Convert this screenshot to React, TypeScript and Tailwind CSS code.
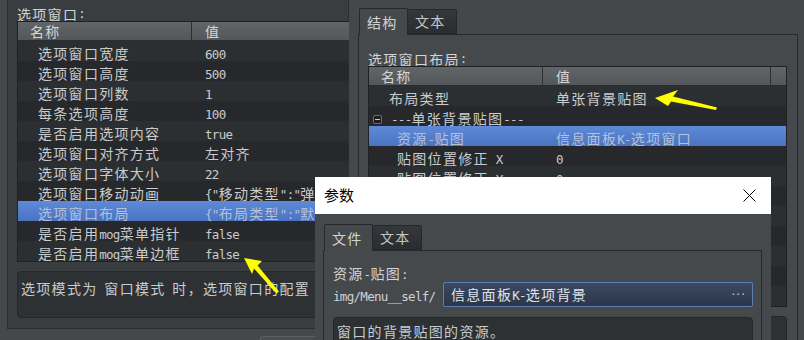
import React from 'react'

const ASCII = /^[\x00-\x7f]+$/

// mixed text: CJK in Noto Sans CJK, latin in a narrow mono
const Txt = ({ s }: { s: string }) => {
  const parts = s.split(/([\x00-\x7f]+)/).filter((p) => p !== '')
  return (
    <>
      {parts.map((p, i) =>
        ASCII.test(p) ? (
          <span key={i} className="whitespace-pre font-['DejaVu_Sans_Mono',monospace] text-[12.5px] tracking-[-0.7px]">{p}</span>
        ) : (
          <span key={i} className="font-['Noto_Sans_CJK_SC',sans-serif] text-[14px] tracking-[1.3px]">{p}</span>
        )
      )}
    </>
  )
}

type Row = { name: string; value?: string; indent: 'root' | 'child' | 'group' | 'left'; sel?: boolean }

const indentClass = {
  left: 'pl-[20px]',
  root: 'pl-[20px]',
  child: 'pl-[28px]',
  group: 'pl-[4px]'
}

const Expander = () => (
  <span className="mr-[9px] inline-flex h-[9px] w-[9px] items-center justify-center rounded-[2px] border border-[#6a6d70] bg-[#1b1d1f] align-middle">
    <span className="h-px w-[5px] bg-[#c8cacc]" />
  </span>
)

const PropTable = ({ rows, wide, darkFirst }: { rows: Row[]; wide: boolean; darkFirst: boolean }) => (
  <div className={wide ? 'w-[419px] shrink-0 overflow-hidden border border-[#1f2123]' : 'w-[332px] shrink-0 overflow-hidden border border-r-0 border-[#1f2123]'}>
    <div className="flex h-[19px] border-b border-[#2a2c2f] bg-linear-to-b from-[#626568] to-[#54575a] leading-[18px] text-[#d4d6d8]">
      <div className="w-[174px] shrink-0 border-r border-[#2c2e31] pl-[12px]"><Txt s="名称" /></div>
      {wide ? (
        <>
          <div className="w-[228px] shrink-0 border-r border-[#2c2e31] pl-[13px]"><Txt s="值" /></div>
          <div className="flex-1" />
        </>
      ) : (
        <div className="flex-1 pl-[13px]"><Txt s="值" /></div>
      )}
    </div>
    {rows.map((r, i) => {
      const bg = r.sel
        ? 'bg-linear-to-b from-[#5e8ad7] to-[#4b73c2] text-[#b4c1da]'
        : (i % 2 === 0) === darkFirst
          ? 'bg-[#26282b]'
          : 'bg-[#2c2f31]'
      return (
        <div key={i} className={`flex h-[20px] items-start whitespace-nowrap pt-[5px] leading-[15px] ${bg}`}>
          <div className={`w-[174px] shrink-0 ${indentClass[r.indent]}`}>
            {r.indent === 'group' && <Expander />}
            <Txt s={r.name} />
          </div>
          <div className="flex-1 pl-[13px]">{r.value && <Txt s={r.value} />}</div>
        </div>
      )
    })}
  </div>
)

const leftRows: Row[] = [
  { name: '选项窗口宽度', value: '600', indent: 'left' },
  { name: '选项窗口高度', value: '500', indent: 'left' },
  { name: '选项窗口列数', value: '1', indent: 'left' },
  { name: '每条选项高度', value: '100', indent: 'left' },
  { name: '是否启用选项内容', value: 'true', indent: 'left' },
  { name: '选项窗口对齐方式', value: '左对齐', indent: 'left' },
  { name: '选项窗口字体大小', value: '22', indent: 'left' },
  { name: '选项窗口移动动画', value: '{"移动类型":"弹', indent: 'left' },
  { name: '选项窗口布局', value: '{"布局类型":"默', indent: 'left', sel: true },
  { name: '是否启用mog菜单指针', value: 'false', indent: 'left' },
  { name: '是否启用mog菜单边框', value: 'false', indent: 'left' }
]

const rightRows: Row[] = [
  { name: '布局类型', value: '单张背景贴图', indent: 'root' },
  { name: '---单张背景贴图---', indent: 'group' },
  { name: '资源-贴图', value: '信息面板K-选项窗口', indent: 'child', sel: true },
  { name: '贴图位置修正 X', value: '0', indent: 'child' },
  { name: '贴图位置修正 Y', value: '0', indent: 'child' },
  { name: '', indent: 'child' },
  { name: '', indent: 'child' },
  { name: '', indent: 'child' },
  { name: '', indent: 'child' },
  { name: '', indent: 'child' },
  { name: '', indent: 'child' }
]

const TabBar = ({ active, other }: { active: string; other: string }) => (
  <div className="flex h-[26px] shrink-0 pl-px">
    <div className="relative z-10 flex h-[27px] w-[49px] items-center rounded-t-[2px] border border-b-0 border-[#25272a] bg-[#46494c] pl-[7px] text-[#d2d4d6]">
      <Txt s={active} />
    </div>
    <div className="mt-px flex h-[25px] w-[49px] items-center rounded-t-[2px] border border-l-0 border-[#25272a] bg-linear-to-b from-[#35383b] to-[#2a2d2f] pl-[7px] text-[#c4c6c8]">
      <Txt s={other} />
    </div>
  </div>
)

export default function App() {
  return (
    <div className="relative flex h-[340px] w-[804px] overflow-hidden bg-[#45484b] text-[#c9cbcd]">
      {/* left property panel */}
      <div className="flex w-[349px] shrink-0 flex-col">
        <div className="ml-[7px] mt-[-2px] flex h-[331px] w-[342px] shrink-0 flex-col border border-[#2a2c2f] bg-[#3a3d40] pl-[9px]">
          <div className="flex h-[22px] shrink-0 items-center pt-[8px] leading-[14px] text-[#d2d4d6]"><Txt s="选项窗口:" /></div>
          <PropTable rows={leftRows} wide={false} darkFirst={false} />
          <div className="mt-[9px] h-[47px] shrink-0 overflow-hidden whitespace-nowrap rounded-[4px] border border-[#25272a] bg-[#2e3134] pl-[3px] pt-[6px] leading-[20px]">
            <Txt s="选项模式为 窗口模式 时，选项窗口的配置" />
          </div>
        </div>
        <div className="ml-[260px] mt-[7px] h-[20px] w-[89px] shrink-0 rounded-[3px] border border-[#5e6164] bg-[#4a4d50]" />
      </div>

      {/* right structure panel */}
      <div className="flex flex-1 flex-col pl-[9px]">
        <div className="mt-[8px]">
          <TabBar active="结构" other="文本" />
        </div>
        <div className="flex w-[440px] flex-1 flex-col border border-[#27292c] bg-[#46494c] pl-[9px]">
          <div className="flex h-[31px] shrink-0 items-center pt-[16px] leading-[14px] text-[#d2d4d6]"><Txt s="选项窗口布局:" /></div>
          <PropTable rows={rightRows} wide darkFirst={false} />
          <div className="mt-[9px] h-[40px] w-[419px] shrink-0 rounded-[4px] border border-[#25272a] bg-[#2e3134]" />
        </div>
      </div>

      {/* 参数 dialog window */}
      <div className="absolute left-[315px] top-[177px] flex h-[170px] w-[456px] flex-col bg-[#46494c]">
        <div className="flex h-[37px] shrink-0 items-center justify-between bg-white pl-[9px] pr-[15px] font-['Noto_Sans_CJK_SC',sans-serif] text-[15px] text-black">
          <span>参数</span>
          <svg width="13" height="13" viewBox="0 0 13 13">
            <path d="M0.5 0.5L12.5 12.5M12.5 0.5L0.5 12.5" stroke="#000" strokeWidth="1" />
          </svg>
        </div>
        <div className="flex flex-1 flex-col pl-[8px] pt-[10px]">
          <TabBar active="文件" other="文本" />
          <div className="flex w-[439px] flex-1 flex-col border border-[#27292c] bg-[#46494c] pl-[9px] pr-[8px]">
            <div className="h-[31px] shrink-0 pt-[13px] leading-[18px] text-[#d2d4d6]"><Txt s="资源-贴图:" /></div>
            <div className="flex h-[25px] shrink-0 items-center">
              <span className="w-[110px] shrink-0 text-[#d0d2d4]"><Txt s="img/Menu__self/" /></span>
              <div className="flex h-[25px] flex-1 items-center justify-between rounded-[2px] border border-[#5b7eb6] bg-linear-to-b from-[#3c4961] to-[#2c3648] pl-[7px] pr-[6px] text-[#dfe3ea]">
                <span className="leading-[20px]"><Txt s="信息面板K-选项背景" /></span>
                <span className="font-['DejaVu_Sans',sans-serif] text-[12px] tracking-[1px] text-[#c8ccd4]">···</span>
              </div>
            </div>
            <div className="mt-[10px] h-[40px] shrink-0 rounded-[4px] border border-[#25272a] bg-[#2e3134] pl-[3px] pt-[3px] leading-[20px]">
              <Txt s="窗口的背景贴图的资源。" />
            </div>
          </div>
        </div>
      </div>

      {/* annotation arrows */}
      <svg className="pointer-events-none absolute left-0 top-0" width="804" height="340" viewBox="0 0 804 340">
        <polygon points="244,258 262,261 257.5,265.5 279,291.5 276.5,293.5 254,268.5 252,274" fill="#ffff00" />
        <polygon points="655,98 678,90 673,96.5 717,107.5 716,110 671,101.5 668,106" fill="#ffff00" />
      </svg>
    </div>
  )
}
